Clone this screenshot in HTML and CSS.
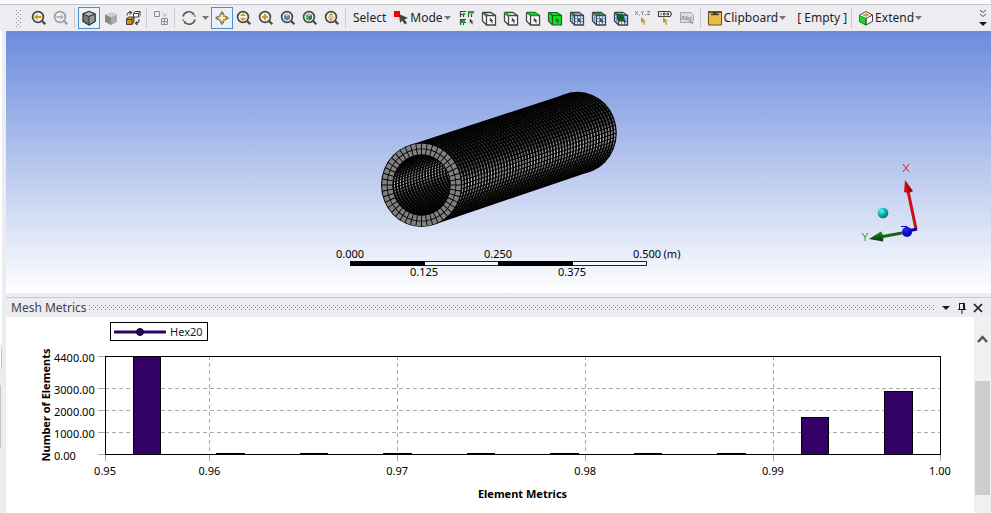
FILE: index.html
```html
<!DOCTYPE html>
<html lang="en">
<head>
<meta charset="utf-8">
<title>Mesh Metrics</title>
<link rel="stylesheet" href="styles.css">
</head>
<body>
<svg class="defs" aria-hidden="true">
  <defs>
    <pattern id="dots" width="4" height="4" patternUnits="userSpaceOnUse">
      <rect width="1" height="1" fill="#8f8f96"/><rect x="2" y="2" width="1" height="1" fill="#8f8f96"/>
    </pattern>
    <symbol id="lens" viewBox="0 0 16 16">
      <circle cx="7" cy="7" r="5.400" fill="#f4f2ee" stroke="currentColor" stroke-width="1.700"/>
      <path d="M10.800 10.800 14.300 14.300" stroke="currentColor" stroke-width="2.300"/>
    </symbol>
    <symbol id="cube" viewBox="0 0 16 16">
      <path d="M1.500 2.500H10l4.500 3V15h-9l-4-4z" fill="#fff"/>
      <path d="M5.500 5.500h9V15h-9zM1.500 2.500h8.500l4.500 3M1.500 2.500l4 3M1.500 2.500V11l4 4" fill="none" stroke="#444" stroke-width="1.300"/>
    </symbol>
    <symbol id="ptr" viewBox="0 0 8 8">
      <path d="M1 0v6l1.500-1.300L4 8l1.300-.6L4 4.500h2z" fill="currentColor"/>
    </symbol>
    <symbol id="grid" viewBox="0 0 16 16">
      <path d="M1.500 2.500h8.500l4.500 3V15h-9l-4-4z" fill="#e4f0fc"/>
      <path d="M2 5l4 3.500h8M2 8l4 3.500h8M8.500 6v9M11.500 6v9M4.500 3l4 2.500M7.500 3l4 2.500M3.500 4v9" fill="none" stroke="#5b9be0"/>
      <path d="M5.500 5.500h9V15h-9zM1.500 2.500h8.500l4.500 3M1.500 2.500l4 3M1.500 2.500V11l4 4" fill="none" stroke="#444" stroke-width="1.300"/>
    </symbol>
    <radialGradient id="cyan" cx=".35" cy=".3" r=".7"><stop offset="0" stop-color="#5ff"/><stop offset=".5" stop-color="#16b5b5"/><stop offset="1" stop-color="#077"/></radialGradient>
    <radialGradient id="blue" cx=".4" cy=".3" r=".7"><stop offset="0" stop-color="#22f"/><stop offset="1" stop-color="#00a"/></radialGradient>
    <linearGradient id="red"><stop offset="0" stop-color="#e01010"/><stop offset="1" stop-color="#800"/></linearGradient>
    <linearGradient id="green" x2="0" y2="1"><stop offset="0" stop-color="#1b8a1b"/><stop offset="1" stop-color="#043c04"/></linearGradient>
  </defs>
</svg>

<div class="top-edge"></div>
<nav class="toolbar" aria-label="Graphics">
  <svg class="grip" aria-hidden="true"><rect width="100%" height="100%" fill="url(#dots)"/></svg>
  <button class="tool" aria-label="Previous view"><svg viewBox="0 0 16 16"><use href="#lens"/><path d="M3 7 6.500 4v2h4v2h-4v2z" fill="#d39a1c"/></svg></button>
  <button class="tool off" aria-label="Next view"><svg viewBox="0 0 16 16"><use href="#lens"/><path d="M11 7 7.500 4v2h-4v2h4v2z" fill="#b5b5b5"/></svg></button>
  <span class="sep"></span>
  <button class="tool on" aria-label="Shaded with edges"><svg viewBox="0 0 16 16"><path d="M8 1.500 14 4v7.500L8 15l-6-3.500V4z" fill="#777" stroke="#333" stroke-width="1.300"/><path d="M8 1.500 14 4 8 6.500 2 4z" fill="#bbb" stroke="#333"/><path d="M8 6.500V15l6-3.500V4z" fill="#999" stroke="#333"/></svg></button>
  <button class="tool" aria-label="Shaded"><svg viewBox="0 0 16 16"><path d="M2 4.500 8 7v8l-6-3z" fill="#888"/><path d="M8 7l6-2.500V12l-6 3z" fill="#aaa"/><path d="M2 4.500 9 2l5 2.500L8 7z" fill="#ccc"/></svg></button>
  <button class="tool" aria-label="Show mesh"><svg viewBox="0 0 16 16"><path d="M1.500 8.500 4 7h5v5l-2 2.500H1.500z" fill="#c99418" stroke="#444"/><path d="M1.500 9.500H7v5M7 9.500 9 7.500" fill="none" stroke="#444"/><path d="M8.500 3.500 10 1.500h5v4L13.500 7h-5zM8.500 3.500h5V7M13.500 3.500l1.500-2" fill="#fff" stroke="#444"/><path d="M2 5.500C2 3 4 2 6 2.500M4.500 1 6.500 2.500 5 4.500M14 9c.5 2.500-1 4.500-3 4.500M12 11.500l-1.500 2 2 1.500" fill="none" stroke="#444" stroke-width="1.100"/></svg></button>
  <span class="sep"></span>
  <button class="tool" aria-label="Preferences"><svg viewBox="0 0 16 16" fill="none" stroke="#8c8c92"><path d="M1.500 1.500h5v5h-5zM8.500 8.500h6v6h-6zM11.500 8.500v6M8.500 11.500h6"/><path d="M9 3l4 3M13 3v3h-3" stroke="#bdbdc2"/></svg></button>
  <span class="sep"></span>
  <button class="tool" aria-label="Rotate"><svg viewBox="0 0 16 16" fill="none" stroke-width="1.500"><path d="M2 6.500A6 6 0 0 1 12 3.500M14 9.500A6 6 0 0 1 4 12.500" stroke="#555"/><path d="M12.500 4Q14 5.500 14 7M2 9q0 1.500 1.500 3" stroke="#b78c27"/><path d="M13 2v2.500h-2.500zM3 14v-2.500h2.500z" fill="#555"/></svg></button>
  <button class="drop" aria-label="Rotate options"><svg viewBox="0 0 7 4"><path d="M0 0h7L3.500 4z"/></svg></button>
  <button class="tool on" aria-label="Pan"><svg viewBox="0 0 16 16"><path d="M8 1l2.500 3.500h-5zM8 15l2.500-3.500h-5z" fill="#444"/><path d="M1 8l3.500-2.500v5zM15 8l-3.500-2.500v5z" fill="#444"/><path d="M5 5h2v2H5zM9 5h2v2H9zM5 9h2v2H5zM9 9h2v2H9zM7 2.500h2v2H7zM7 11.500h2v2H7zM2.500 7h2v2h-2zM11.500 7h2v2h-2z" fill="#d39a1c"/></svg></button>
  <button class="tool" aria-label="Zoom"><svg viewBox="0 0 16 16"><use href="#lens"/><path d="M7 3l3 3H4zM7 11l3-3H4z" fill="#d39a1c"/></svg></button>
  <button class="tool" aria-label="Box zoom"><svg viewBox="0 0 16 16"><use href="#lens"/><path d="M6 4h2v2h2v2H8v2H6V8H4V6h2z" fill="#d39a1c"/></svg></button>
  <button class="tool" aria-label="Zoom to fit"><svg viewBox="0 0 16 16"><use href="#lens"/><path d="M7 3.500 10 5v4L7 10.500 4 9V5z" fill="#5f82a8"/><path d="M7 3.500 10 5 7 6.500 4 5z" fill="#a9c4dd"/></svg></button>
  <button class="tool" aria-label="Zoom to selection"><svg viewBox="0 0 16 16"><use href="#lens"/><path d="M7 3.500 10 5v4L7 10.500 4 9V5z" fill="#35784c"/><path d="M7 3.500 10 5 7 6.500 4 5z" fill="#9cc7ad"/><path d="M4 5l3 1.500v4L4 9z" fill="#47b35f"/></svg></button>
  <button class="tool" aria-label="Magnifier"><svg viewBox="0 0 16 16"><use href="#lens"/><path d="M7 3l2.500 2.500h-5zM7 11l2.500-2.500h-5zM4 6.500h6v1H4z" fill="#c9982c"/></svg></button>
  <span class="sep"></span>
  <span class="label">Select</span>
  <button class="text-tool"><svg class="icon" viewBox="0 0 16 16"><path d="M1 1h6v6H1z" fill="#f00"/><path d="M6 4l9 4-3.500 1.500L14 13l-2 1.500-3-4L7 13z" fill="#444"/></svg>Mode<svg class="caret" viewBox="0 0 7 4"><path d="M0 0h7L3.500 4z"/></svg></button>
  <button class="tool" aria-label="Auto select"><svg viewBox="0 0 16 16"><path d="M1.500 7V1.500H7M1.500 4.500H6M4.500 3v4M9.500 7V1.500H15M1.500 15V9.500H7M1.500 12.500H7M4.500 12v3M12.500 4v3" fill="none" stroke="#444" stroke-width="1.200"/><path d="M9 1h6v2.500H9zM2 10h4v3H2zM4 3h2v2H4z" fill="#18a526"/><use href="#ptr" x="10" y="8" width="6" height="7" color="#444"/></svg></button>
  <button class="tool" aria-label="Vertex"><svg viewBox="0 0 16 16"><use href="#cube"/><circle cx="5" cy="5" r="1.700" fill="#15912b"/><use href="#ptr" x="8" y="7" width="6" height="7" color="#444"/></svg></button>
  <button class="tool" aria-label="Edge"><svg viewBox="0 0 16 16"><use href="#cube"/><path d="M2 3l4 3" stroke="#15a52b" stroke-width="2.500"/><use href="#ptr" x="8" y="7" width="6" height="7" color="#444"/></svg></button>
  <button class="tool" aria-label="Face"><svg viewBox="0 0 16 16"><use href="#cube"/><path d="M2 2.500h8l4 3H6z" fill="#0fd31f"/><use href="#ptr" x="8" y="7" width="6" height="7" color="#444"/></svg></button>
  <button class="tool" aria-label="Body"><svg viewBox="0 0 16 16"><path d="M1.500 2.500H10l4.500 3V15h-9l-4-4z" fill="#0ee41c"/><path d="M5.500 5.500h9V15h-9zM1.500 2.500H10l4.500 3M1.500 2.500l4 3M1.500 2.500V11l4 4" fill="none" stroke="#275b2b" stroke-width="1.200"/><use href="#ptr" x="8" y="7" width="6" height="7" color="#246b2b"/></svg></button>
  <button class="tool" aria-label="Node"><svg viewBox="0 0 16 16"><use href="#grid"/><circle cx="5" cy="5" r="1.600" fill="#15752b"/><use href="#ptr" x="8" y="7" width="6" height="7" color="#444"/></svg></button>
  <button class="tool" aria-label="Element face"><svg viewBox="0 0 16 16"><use href="#grid"/><path d="M4 3h5l3 2H6z" fill="#198d30"/><use href="#ptr" x="8" y="7" width="6" height="7" color="#444"/></svg></button>
  <button class="tool" aria-label="Element"><svg viewBox="0 0 16 16"><use href="#grid"/><path d="M4 4h5l2 1.500V11H6L4 9z" fill="#145f28"/><use href="#ptr" x="9" y="7" width="6" height="7" color="#444"/></svg></button>
  <button class="tool" aria-label="Coordinates"><svg viewBox="0 0 16 16"><path d="M0 1l3 4M3 1 0 5M6 1l1.500 2L9 1M7.500 3v2M12 1.500h3L12 4.500h3M4.500 4.500v1M10.500 4.500v1" fill="none" stroke="#88888c"/><use href="#ptr" x="5" y="6" width="8" height="10" color="#c99a2b"/></svg></button>
  <button class="tool" aria-label="Label"><svg viewBox="0 0 16 16"><path d="M1.500 1.500H13L14.500 4 13 6.500H1.500z" fill="#fff" stroke="#444" stroke-width="1.200"/><path d="M4 3v2.500M6.500 3h1.500v2H6.500zM10 3h1.500v2H10z" fill="none" stroke="#444"/><use href="#ptr" x="5" y="6" width="8" height="10" color="#c99a2b"/></svg></button>
  <button class="tool" aria-label="Annotation"><svg viewBox="0 0 16 16"><path d="M1.500 2.500H12l2.500 3v5l-2 2H1.500z" fill="#dcdce0" stroke="#a5a5aa"/><text class="abc" x="2" y="10">Abc</text><path d="M10 10l4 4" stroke="#a5a5aa" stroke-width="2"/></svg></button>
  <span class="sep"></span>
  <button class="text-tool"><svg class="icon" viewBox="0 0 16 16"><path d="M1.500 2h13v13h-13z" fill="#e8bd45" stroke="#665020"/><path d="M1 2h14M4 4.500h8M6 3.500h4" stroke="#4d3d1c" stroke-width="1.500"/></svg>Clipboard<svg class="caret" viewBox="0 0 7 4"><path d="M0 0h7L3.500 4z"/></svg></button>
  <span class="label empty">[ Empty ]</span>
  <span class="sep"></span>
  <button class="text-tool"><svg class="icon" viewBox="0 0 16 16"><path d="M1.500 5 8 1.500 14.500 5v6.500L8 15l-6.500-3.500z" fill="#fff" stroke="#444"/><path d="M1.500 5.500 8 8.500V15l-6.500-3.500z" fill="#16df20" stroke="#2c7d31"/><path d="M8 8.500 14.500 5M8 8.500V15" stroke="#444"/><path d="M5 5h6M8 3v4" stroke="#d29020" stroke-width="1.300"/></svg>Extend<svg class="caret" viewBox="0 0 7 4"><path d="M0 0h7L3.500 4z"/></svg></button>
  <button class="overflow" aria-label="More tools"><svg viewBox="0 0 8 18"><path d="M1 1l3 2.500L7 1M1 5l3 2.500L7 5" fill="none" stroke="#555"/><path d="M0 13h8l-4 4z" fill="#111"/></svg></button>
</nav>

<div class="workspace">
  <aside class="gutter"><i class="dock"></i><i class="tab"></i><i class="thumb-edge"></i></aside>
  <main class="main">
    <section class="viewport" aria-label="Geometry">
      <svg class="mesh" id="mesh" viewBox="0 0 240 140" role="img" aria-label="Meshed tube"></svg>
      <svg class="ruler" viewBox="0 0 297 34">
        <path d="M0 15.500h296.500v4H0" fill="#fff" fill-opacity=".5" stroke="#222"/>
        <path d="M0 15h75v5H0zM148 15h75v5h-75z"/>
        <text x="0" y="12">0.000</text><text x="148" y="12">0.250</text><text x="297" y="12">0.500</text><text x="322" y="12">(m)</text>
        <text x="74" y="30">0.125</text><text x="222" y="30">0.375</text>
      </svg>
      <svg class="triad" viewBox="0 0 64 90" role="img" aria-label="Axes">
        <path d="M43 4l6 8M49 4l-6 8" stroke="#e0202c" fill="none"/>
        <path d="M2 73l3 4 3-4M5 77v4" stroke="#18a018" fill="none"/>
        <path d="M48 31l8 38" stroke="#c41212" stroke-width="3"/>
        <path d="M45 20l8 11q-4 3-9 1z" fill="url(#red)"/>
        <path d="M42 73 20 77" stroke="#126b12" stroke-width="3"/>
        <path d="M9 79l12-7.500q3 4 2 10z" fill="url(#green)"/>
        <path d="M48 71l9-2" stroke="#0000a8" stroke-width="3"/>
        <path d="M41 66.500h6l-3 3" stroke="#0000d0" fill="none"/>
        <circle cx="47" cy="72" r="5" fill="url(#blue)"/><circle cx="23" cy="53" r="5.300" fill="url(#cyan)"/>
      </svg>
    </section>

    <section class="panel">
      <header class="panel-head">
        <h2>Mesh Metrics</h2>
        <svg class="rail" aria-hidden="true"><rect width="100%" height="100%" fill="url(#dots)"/></svg>
        <button aria-label="Panel menu"><svg viewBox="0 0 10 12"><path d="M1 4h8L5 8z" fill="#1b1b1b"/></svg></button>
        <button aria-label="Pin"><svg viewBox="0 0 10 12"><path d="M2.500 1v6M2 1.500h5M1 7.500h8M5 8v4" stroke="#1b1b1b" fill="none"/><path d="M6 1h2v6H6z" fill="#1b1b1b"/></svg></button>
        <button aria-label="Close"><svg viewBox="0 0 10 12"><path d="M1 2l8 8M9 2l-8 8" stroke="#1b1b1b" stroke-width="1.700"/></svg></button>
      </header>
      <div class="panel-body">
        <div class="chart">
          <div class="legend"><svg viewBox="0 0 52 12"><path d="M1 6h50" stroke="#330066" stroke-width="3" stroke-linecap="round"/><circle cx="26" cy="6" r="3.500" fill="#330066" stroke="#111"/></svg>Hex20</div>
          <svg class="plot" id="plot" role="img" aria-label="Number of elements by metric"></svg>
        </div>
        <div class="scroll"><button aria-label="Scroll up"><svg viewBox="0 0 11 8"><path d="M1 7l4.500-5L10 7" fill="none" stroke="#555" stroke-width="2.500"/></svg></button><div class="thumb"></div></div>
      </div>
    </section>
  </main>
</div>
<script src="app.js"></script>
</body>
</html>
```
FILE: styles.css
```css
* { box-sizing: border-box; }
body {
  margin: 0;
  height: 100vh;
  overflow: hidden;
  display: flex;
  flex-direction: column;
  background: #ededf1;
  color: #1e1e1e;
  font: 12px/16px "Noto Sans", "Open Sans", sans-serif;
}
button {
  border: 0;
  margin: 0;
  padding: 0;
  background: none;
  color: inherit;
  font: inherit;
  display: flex;
  align-items: center;
  justify-content: center;
}
svg { display: block; flex: none; }
.defs { position: absolute; width: 0; height: 0; }
.top-edge { height: 5px; flex: none; background: #fafafa; border-bottom: 1px solid #c6c6ca; }

.toolbar { flex: none; height: 26px; display: flex; align-items: center; padding: 0 4px 0 16px; }
.grip { width: 5px; height: 17px; margin-right: 7px; }
.tool { width: 22px; height: 22px; flex: none; color: #484848; border: 1px solid transparent; }
.tool svg { width: 16px; height: 16px; }
.tool.off { color: #9c9c9f; }
.tool.on { border-color: #4a90d9; background: #e9f1fa; }
.sep { width: 1px; height: 20px; flex: none; margin: 0 3px 0 2px; background: #c9c9ce; }
.drop { width: 11px; height: 22px; }
.drop svg, .caret { width: 7px; height: 4px; fill: #77777b; }
.label { padding: 0 4px; white-space: nowrap; }
.text-tool { padding: 0 5px 0 3px; height: 22px; }
.icon { width: 16px; height: 16px; margin-right: 1px; }
.caret { margin-left: 1px; }
.empty { padding: 0 2px 0 6px; }
.overflow { margin-left: auto; width: 8px; }
.overflow svg { width: 8px; height: 18px; }
.abc { font: bold 6px "Noto Sans", sans-serif; fill: #8e8e93; }

.workspace { flex: 1; min-height: 0; display: flex; }
.gutter { width: 6px; flex: none; display: flex; flex-direction: column; align-items: flex-start; }
.dock { width: 2px; flex: 0 0 314px; margin-bottom: 4px; background: #fff; }
.tab { width: 2px; flex: 0 0 20px; margin-bottom: 16px; background: #fff; border-right: 1px solid #c4c4c8; }
.thumb-edge { width: 1px; flex: 0 0 63px; background: #c4c4c8; }
.main { flex: 1; min-width: 0; display: flex; flex-direction: column; }

.viewport {
  position: relative;
  flex: none;
  height: 262px;
  display: flex;
  flex-direction: column;
  align-items: center;
  padding-top: 59px;
  background: linear-gradient(#6b8bdc, #fff);
}
.mesh { width: 240px; height: 140px; }
.ruler { width: 297px; height: 34px; margin-top: 16px; overflow: visible; font-size: 11px; text-anchor: middle; }
.triad { position: absolute; right: 67px; bottom: 43px; width: 64px; height: 90px; }

.panel { flex: 1; min-height: 0; margin-top: 4px; display: flex; flex-direction: column; border-top: 1px solid #c9c9d4; }
.panel-head { flex: none; height: 19px; display: flex; align-items: center; padding: 0 8px 0 5px; }
.panel-head h2 { margin: 0 3px 0 0; font: inherit; color: #444; }
.rail { flex: 1; min-width: 0; width: 0; height: 5px; margin-right: 0; }
.panel-head button { width: 10px; margin-left: 6px; }
.panel-head svg:not(.rail) { width: 10px; height: 12px; }
.panel-body { flex: 1; min-height: 0; display: flex; background: #fff; }
.chart { flex: 1; min-width: 0; padding: 5px 34px 0 99px; }
.legend {
  width: max-content;
  height: 19px;
  margin-left: 5px;
  padding: 0 4px 0 3px;
  display: flex;
  align-items: center;
  gap: 4px;
  border: 1px solid #000;
  font-size: 11px;
}
.legend svg { width: 52px; height: 12px; }
.plot { width: 100%; height: 99px; margin-top: 15px; overflow: visible; font-size: 11px; }
.plot rect, .plot line { shape-rendering: crispEdges; }
.grid { stroke: #a9a9a9; stroke-dasharray: 4 3; }
.tick { stroke: #a9a9a9; }
.bar { fill: #330066; stroke: #000; }
.frame { fill: none; stroke: #000; }
.x-label, .axis { text-anchor: middle; }
.y-label { text-anchor: start; }
.axis { font-weight: bold; fill: #000; }

.scroll { width: 17px; flex: none; padding: 16px 1px 0; background: #f0f0f0; }
.scroll button { width: 15px; height: 11px; margin-bottom: 37px; }
.scroll svg { width: 11px; height: 8px; }
.thumb { height: 114px; background: #cdcdcd; }
```
FILE: app.js
```javascript
const NS = "http://www.w3.org/2000/svg";

function add(parent, name, attrs, text) {
  const node = document.createElementNS(NS, name);
  for (const key in attrs) node.setAttribute(key, attrs[key]);
  if (text) node.textContent = text;
  parent.appendChild(node);
  return node;
}

/* Tube: front ring centre, radii and the vector to the far end. */
const tube = { x: 42.5, y: 95, rx: 40, ry: 42, bore: 0.71, dx: 156, dy: -52, around: 44, along: 54 };

function point(angle, scale, depth) {
  const shrink = 1 - 0.03 * depth;
  return [
    tube.x + tube.dx * depth + tube.rx * scale * shrink * Math.cos(angle),
    tube.y + tube.dy * depth + tube.ry * scale * shrink * Math.sin(angle)
  ];
}

function quad(a0, a1, s0, s1, d0, d1) {
  const pts = s0 === s1
    ? [point(a0, s0, d0), point(a1, s0, d0), point(a1, s0, d1), point(a0, s0, d1)]
    : [point(a0, s0, 0), point(a1, s0, 0), point(a1, s1, 0), point(a0, s1, 0)];
  return "M" + pts.map(p => p[0].toFixed(2) + " " + p[1].toFixed(2)).join("L") + "Z";
}

/* Half-width element rows, brightest along the line that faces the light. */
function drawWall(parent, scale, centre, light) {
  const rows = tube.around * 1.5;
  const step = Math.PI * 2 / rows;
  for (let i = 0; i < rows; i++) {
    const a = i * step;
    const facing = Math.cos(a + step / 2 - centre);
    if (facing < 0.3) continue;
    const lit = Math.max(0, Math.cos(a + step / 2 - light));
    const shade = Math.round(45 * lit * facing + 20 + 130 * Math.pow(lit, 18));
    const inset = Math.min(0.4, 0.12 / (facing * scale)) * step;
    let d = "";
    for (let j = 0; j < tube.along; j++) {
      d += quad(a + inset, a + step - inset, scale, scale, (j + 0.3) / tube.along, (j + 0.7) / tube.along);
    }
    add(parent, "path", { d, fill: `rgb(${shade},${shade},${shade})` });
  }
}

function drawMesh() {
  const svg = document.getElementById("mesh");
  const { x, y, rx, ry, bore, dx, dy } = tube;
  const axis = Math.atan2(dy, dx);
  add(svg, "path", { d: `M${x - 13} ${y - 39.5}L${x + dx - 13} ${y + dy - 38.5}L${x + dx + 13} ${y + dy + 38.5}L${x + 13} ${y + 39.5}Z` });
  add(svg, "ellipse", { cx: x + dx, cy: y + dy, rx: rx * 0.97 + 0.5, ry: ry * 0.97 + 0.5 });
  drawWall(svg, 1, axis, 0.03);
  add(svg, "ellipse", { cx: x, cy: y, rx: rx + 0.5, ry });
  const clip = add(svg, "clipPath", { id: "bore" });
  add(clip, "ellipse", { cx: x, cy: y, rx: rx * bore, ry: ry * bore });
  const inside = add(svg, "g", { "clip-path": "url(#bore)" });
  drawWall(inside, bore, axis + Math.PI, Math.PI);
  const step = Math.PI * 2 / tube.around;
  let d = "";
  for (let i = 0; i < tube.around; i++) {
    const a = i * step;
    d += quad(a + 0.012, a + step - 0.012, 0.985, 0.87);
    d += quad(a + 0.014, a + step - 0.014, 0.85, 0.73);
  }
  add(svg, "path", { d, fill: "#808080" });
}

function drawPlot() {
  const svg = document.getElementById("plot");
  const bottom = 98;
  const xs = [["0.95", 0], ["0.96", 12.5], ["0.97", 35], ["0.98", 57.5], ["0.99", 80], ["1.00", 100]];
  const ys = [["4400.00", 0], ["3000.00", 32], ["2000.00", 54], ["1000.00", 76], ["0.00", bottom]];
  xs.forEach(([label, x]) => {
    if (x > 0 && x < 100) add(svg, "line", { class: "grid", x1: x + "%", x2: x + "%", y1: 0, y2: bottom });
    add(svg, "line", { class: "tick", x1: x + "%", x2: x + "%", y1: bottom, y2: bottom + 7 });
    add(svg, "text", { class: "x-label", x: x + "%", y: bottom + 21 }, label);
  });
  ys.forEach(([label, y]) => {
    if (y > 0 && y < bottom) add(svg, "line", { class: "grid", x1: 0, x2: "100%", y1: y, y2: y });
    add(svg, "line", { class: "tick", x1: -7, x2: 0, y1: y, y2: y });
    add(svg, "text", { class: "y-label", x: -51, y: y + 6 }, label);
  });
  add(svg, "rect", { class: "frame", x: 0, y: 0, width: "100%", height: bottom });
  [98, 1, 1, 1, 1, 1, 1, 1, 37, 63].forEach((h, i) => {
    add(svg, "rect", { class: "bar", x: 3.4 + i * 10 + "%", y: bottom - h, width: "3.25%", height: h });
  });
  add(svg, "text", { class: "axis", x: "50%", y: bottom + 44 }, "Element Metrics");
  add(svg, "text", { class: "axis", transform: "translate(-55 49) rotate(-90)" }, "Number of Elements");
}

drawMesh();
drawPlot();
```
